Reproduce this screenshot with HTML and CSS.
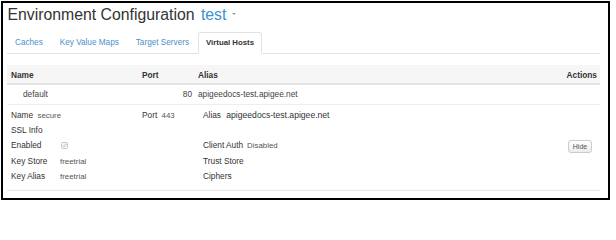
FILE: index.html
```html
<!DOCTYPE html>
<html>
<head>
<meta charset="utf-8">
<link rel="stylesheet" href="styles.css">
</head>
<body>
<div class="frame">
  <h1 class="title">Environment Configuration <span class="env">test</span><span class="caret"></span></h1>
  <ul class="tabs">
    <li>Caches</li>
    <li>Key Value Maps</li>
    <li>Target Servers</li>
    <li class="active">Virtual Hosts</li>
  </ul>
  <div class="table">
    <div class="thead">
      <span>Name</span>
      <span>Port</span>
      <span>Alias</span>
      <span class="actions">Actions</span>
    </div>
    <div class="row">
      <span class="name-cell">default</span>
      <span class="port-cell">80</span>
      <span>apigeedocs-test.apigee.net</span>
      <span></span>
    </div>
    <div class="details">
      <span class="span2">Name <span class="val">secure</span></span>
      <span>Port <span class="val">443</span></span>
      <span class="span2">Alias <span class="val alias">apigeedocs-test.apigee.net</span></span>
      <span></span>

      <span class="span2">SSL Info</span>
      <span></span><span></span><span></span><span></span>

      <span>Enabled</span>
      <span class="chk"><svg width="7" height="7" viewBox="0 0 7 7"><rect x="0.5" y="0.5" width="6" height="6" rx="1" fill="#f5f5f5" stroke="#c8c8c8"/><path d="M1.8 3.6 L3 4.8 L5.3 1.9" fill="none" stroke="#b0b0b0" stroke-width="0.8"/></svg></span>
      <span></span>
      <span>Client Auth</span>
      <span class="val">Disabled</span>
      <span class="btn-cell"><span class="btn">Hide</span></span>

      <span>Key Store</span>
      <span class="val">freetrial</span>
      <span></span>
      <span class="span2">Trust Store</span>
      <span></span>

      <span>Key Alias</span>
      <span class="val">freetrial</span>
      <span></span>
      <span class="span2">Ciphers</span>
      <span></span>
    </div>
  </div>
</div>
</body>
</html>
```
FILE: styles.css
```css
body {
  margin: 0;
  background: #fff;
  font-family: "Liberation Sans", Arial, sans-serif;
  color: #333;
}
.frame {
  box-sizing: border-box;
  width: 609px;
  height: 199px;
  margin: 1px 0 0 1px;
  border: 2px solid #000;
  padding: 0 8px 0 4px;
}
.title {
  margin: 0;
  padding: 2.3px 0 0 0.5px;
  font-size: 15.8px;
  line-height: 20px;
  font-weight: normal;
  color: #333;
  white-space: nowrap;
}
.env {
  color: #3d8fd1;
  margin-left: 2px;
}
.caret {
  display: inline-block;
  width: 0;
  height: 0;
  border-left: 2.5px solid transparent;
  border-right: 2.5px solid transparent;
  border-top: 2.5px solid #999;
  margin-left: 6px;
  vertical-align: 5px;
}
.tabs {
  list-style: none;
  margin: 6.7px 0 0;
  padding: 0;
  display: flex;
  height: 21px;
  border-bottom: 1px solid #e2e2e2;
}
.tabs li {
  padding: 0 8px;
  margin-right: 1px;
  font-size: 8.2px;
  line-height: 21px;
  color: #4a8fcc;
  white-space: nowrap;
}
.tabs li.active {
  padding: 0 7px;
  border: 1px solid #e2e2e2;
  border-bottom-color: #fff;
  border-radius: 3px 3px 0 0;
  line-height: 20px;
  height: 20px;
  background: #fff;
  color: #333;
  font-weight: bold;
  font-size: 7.8px;
}
.table {
  margin-top: 11px;
  font-size: 8.3px;
}
.thead, .row {
  display: grid;
  grid-template-columns: 131px 56px 1fr auto;
  padding: 0 3px 0 4px;
}
.thead {
  background: #f6f6f6;
  padding-top: 2px;
  line-height: 16px;
  font-weight: bold;
  color: #333;
  border-bottom: 2px solid #e4e4e4;
}
.row {
  line-height: 19px;
  color: #444;
  border-bottom: 1px solid #eee;
}
.name-cell { padding-left: 12px; }
.port-cell { text-align: right; padding-right: 6px; }
.details {
  display: grid;
  grid-template-columns: 49px 82px 61px 44px 1fr auto;
  grid-auto-rows: 15.2px;
  align-items: center;
  padding: 3px 0 6px 4px;
  line-height: 15.2px;
  color: #333;
  border-bottom: 1px solid #e6e6e6;
  white-space: nowrap;
}
.span2 { grid-column: span 2; }
.val {
  color: #555;
  font-size: 7.9px;
  margin-left: 2px;
}
.details > .val { margin-left: 0; }
.val.alias {
  font-size: 8.6px;
  color: #333;
  margin-left: 3px;
}
.chk {
  display: flex;
  align-items: center;
  height: 15.2px;
  padding-left: 1px;
}
.btn-cell {
  display: flex;
  align-items: center;
  justify-content: flex-end;
  padding: 2px 8px 0 0;
  height: 15.2px;
  box-sizing: border-box;
}
.btn {
  box-sizing: border-box;
  display: inline-block;
  width: 24px;
  height: 13px;
  border: 1px solid #ccc;
  border-radius: 3px;
  background: linear-gradient(#fff, #ececec);
  font-size: 7px;
  line-height: 11px;
  text-align: center;
  color: #555;
}
```
